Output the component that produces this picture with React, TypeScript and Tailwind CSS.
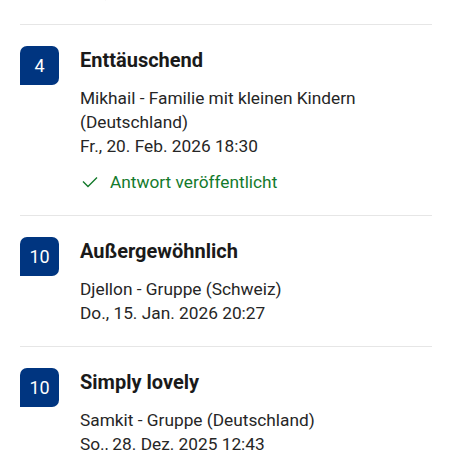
import React from "react";

type Review = {
  score: string;
  title: string;
  lines: string[];
  published?: boolean;
};

const reviews: Review[] = [
  {
    score: "4",
    title: "Enttäuschend",
    lines: ["Mikhail - Familie mit kleinen Kindern", "(Deutschland)", "Fr., 20. Feb. 2026 18:30"],
    published: true,
  },
  {
    score: "10",
    title: "Außergewöhnlich",
    lines: ["Djellon - Gruppe (Schweiz)", "Do., 15. Jan. 2026 20:27"],
  },
  {
    score: "10",
    title: "Simply lovely",
    lines: ["Samkit - Gruppe (Deutschland)", "So., 28. Dez. 2025 12:43"],
  },
];

function Divider() {
  return <div className="ml-[20px] mr-[18px] h-px bg-[#e6e6e6]" />;
}

function Item({ r }: { r: Review }) {
  return (
    <div className="flex gap-[21px] pl-[20px] pr-4 pt-[21px] pb-[21px]">
      <div className="flex h-[39px] w-[39px] shrink-0 items-center justify-center rounded-[7px] rounded-bl-none bg-[#003580] text-[18px] leading-none text-white">
        {r.score}
      </div>
      <div className="flex flex-col">
        <div className="text-[20px] font-bold leading-[28px] text-[#1a1a1a]">{r.title}</div>
        <div className="mt-[12px] flex flex-col text-[17.3px] leading-[24px] text-[#262626]">
          {r.lines.map((l, i) => (
            <div key={i}>{l}</div>
          ))}
        </div>
        {r.published && (
          <div className="mt-[12px] flex items-center gap-[12px] text-[17.3px] leading-[24px] text-[#147a2c]">
            <svg width="16" height="12" viewBox="0 0 16 12" className="ml-[2px]" fill="none">
              <path d="M1 5.5 6 10.5 15 1.5" stroke="#147a2c" strokeWidth="1.4" />
            </svg>
            <span>Antwort veröffentlicht</span>
          </div>
        )}
      </div>
    </div>
  );
}

export default function App() {
  return (
    <div
      className="h-[450px] w-[450px] overflow-hidden bg-white"
      style={{ fontFamily: "Roboto, 'Noto Sans', sans-serif" }}
    >
      <div className="-mt-[20px] pb-[20px] pl-[80px] text-[17.3px] leading-[24px] text-[#262626]">
        Sa., 10. Jan. 2026 09:14
      </div>
      <Divider />
      {reviews.map((r, i) => (
        <React.Fragment key={i}>
          <Item r={r} />
          {i < reviews.length - 1 && <Divider />}
        </React.Fragment>
      ))}
    </div>
  );
}
